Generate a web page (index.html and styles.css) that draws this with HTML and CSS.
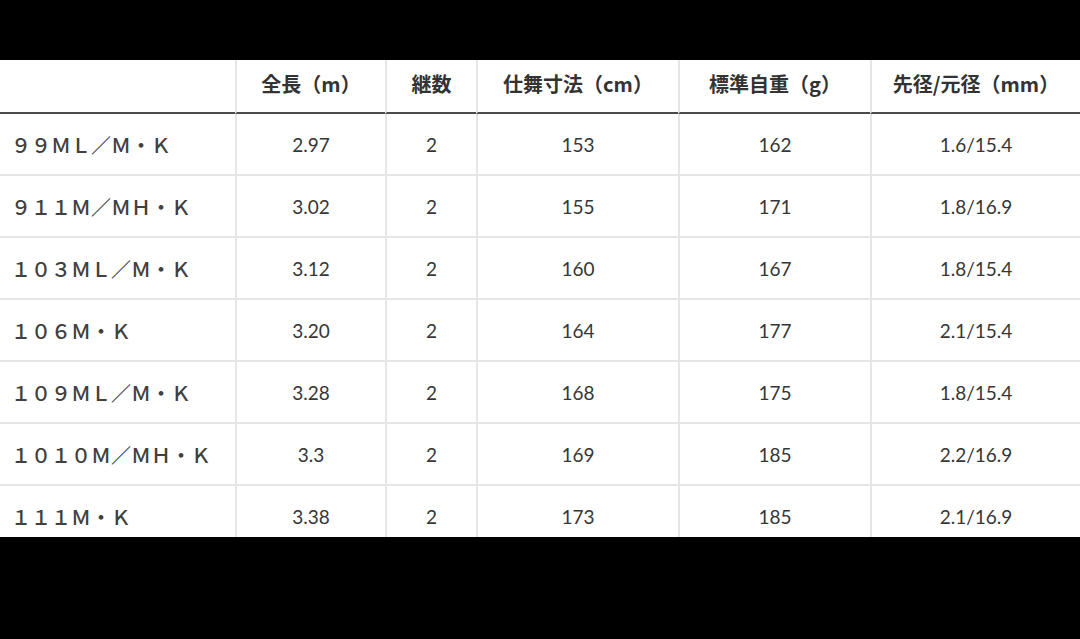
FILE: index.html
```html
<!DOCTYPE html>
<html lang="ja">
<head>
<meta charset="utf-8">
<title>スペック表</title>
<link rel="stylesheet" href="styles.css">
</head>
<body>
<div class="frame">
  <div class="sheet">
    <div class="grid">
      <div class="cell head first"></div>
      <div class="cell head">全長（m）</div>
      <div class="cell head">継数</div>
      <div class="cell head">仕舞寸法（cm）</div>
      <div class="cell head">標準自重（g）</div>
      <div class="cell head">先径/元径（mm）</div>

      <div class="cell name first">９９ＭＬ／Ｍ・Ｋ</div>
      <div class="cell num">2.97</div>
      <div class="cell num">2</div>
      <div class="cell num">153</div>
      <div class="cell num">162</div>
      <div class="cell num">1.6/15.4</div>

      <div class="cell name first">９１１Ｍ／ＭＨ・Ｋ</div>
      <div class="cell num">3.02</div>
      <div class="cell num">2</div>
      <div class="cell num">155</div>
      <div class="cell num">171</div>
      <div class="cell num">1.8/16.9</div>

      <div class="cell name first">１０３ＭＬ／Ｍ・Ｋ</div>
      <div class="cell num">3.12</div>
      <div class="cell num">2</div>
      <div class="cell num">160</div>
      <div class="cell num">167</div>
      <div class="cell num">1.8/15.4</div>

      <div class="cell name first">１０６Ｍ・Ｋ</div>
      <div class="cell num">3.20</div>
      <div class="cell num">2</div>
      <div class="cell num">164</div>
      <div class="cell num">177</div>
      <div class="cell num">2.1/15.4</div>

      <div class="cell name first">１０９ＭＬ／Ｍ・Ｋ</div>
      <div class="cell num">3.28</div>
      <div class="cell num">2</div>
      <div class="cell num">168</div>
      <div class="cell num">175</div>
      <div class="cell num">1.8/15.4</div>

      <div class="cell name first">１０１０Ｍ／ＭＨ・Ｋ</div>
      <div class="cell num">3.3</div>
      <div class="cell num">2</div>
      <div class="cell num">169</div>
      <div class="cell num">185</div>
      <div class="cell num">2.2/16.9</div>

      <div class="cell name first">１１１Ｍ・Ｋ</div>
      <div class="cell num">3.38</div>
      <div class="cell num">2</div>
      <div class="cell num">173</div>
      <div class="cell num">185</div>
      <div class="cell num">2.1/16.9</div>
    </div>
  </div>
</div>
</body>
</html>
```

FILE: styles.css
```css
html, body {
  margin: 0;
  padding: 0;
  background: #000;
}

.frame {
  width: 1080px;
  height: 639px;
  padding-top: 60px;
  box-sizing: border-box;
  background: #000;
}

.sheet {
  height: 477px;
  overflow: hidden;
  background: #fff;
}

.grid {
  display: grid;
  grid-template-columns: 235px 150px 91px 202px 192px 210px;
  grid-template-rows: 54px repeat(7, 62px);
}

.cell {
  box-sizing: border-box;
  display: flex;
  align-items: center;
  justify-content: center;
  border-left: 2px solid #e6e6e6;
  border-bottom: 2px solid #e6e6e6;
  color: #3c3c3c;
}

.cell.first {
  border-left: none;
}

.head {
  font-family: "Noto Sans CJK JP", "Noto Sans CJK SC", sans-serif;
  font-weight: 700;
  font-size: 20px;
  color: #333;
  border-bottom: 2px solid #4a4a4a;
  padding-bottom: 6px;
}

.name {
  justify-content: flex-start;
  padding-left: 11px;
  font-family: "Noto Sans CJK JP", "Noto Sans CJK SC", sans-serif;
  font-weight: 500;
  font-size: 20px;
  color: #404040;
}

.num {
  font-family: Lato, "Liberation Sans", sans-serif;
  font-size: 19px;
  color: #363636;
}
```
